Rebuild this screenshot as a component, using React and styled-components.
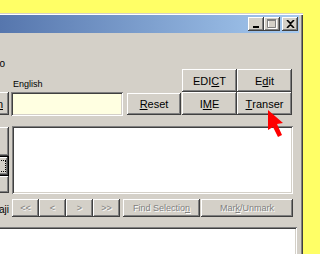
import styled, { createGlobalStyle } from 'styled-components';

const Global = createGlobalStyle`
  html, body {
    margin: 0;
    padding: 0;
    background: #ffff66;
    overflow: hidden;
  }
  body {
    font-family: "Liberation Sans", Arial, sans-serif;
  }
`;

const Screen = styled.div`
  position: relative;
  width: 320px;
  height: 254px;
  overflow: hidden;
  padding-top: 13px;
  box-sizing: border-box;
`;

const Window = styled.div`
  width: 303px;
  height: 260px;
  box-sizing: border-box;
  padding: 2px 4px 0 0;
  background: #d4d0c8;
  box-shadow: inset 0 1px #d4d0c8, inset 0 2px #fff, inset -1px 0 #404040,
    inset -2px 0 #808080;
`;

const TitleBar = styled.div`
  height: 18px;
  display: flex;
  align-items: center;
  justify-content: flex-end;
  padding-right: 1px;
  background: linear-gradient(90deg, #5676ad, #a6caf0);
`;

const raised = `
  background: #d4d0c8;
  box-shadow: inset -1px -1px #404040, inset 1px 1px #fff,
    inset -2px -2px #808080, inset 2px 2px #d4d0c8;
`;

const sunken = `
  box-shadow: inset 1px 1px #808080, inset -1px -1px #fff,
    inset 2px 2px #404040, inset -2px -2px #d4d0c8;
`;

const CapButton = styled.div`
  ${raised}
  width: 16px;
  height: 14px;
  display: flex;
  align-items: center;
  justify-content: center;
  margin-left: ${({ $gap }) => $gap || 0}px;
`;

const Body = styled.div`
  display: flex;
  flex-direction: column;
  overflow: hidden;
`;

const Row = styled.div`
  display: grid;
  grid-template-columns: 11px 116px 55px 55px 55px;
  height: ${({ $h }) => $h}px;
  margin-top: ${({ $mt }) => $mt || 0}px;
`;

const Strip = styled.div`
  width: 9px;
  overflow: hidden;
  display: flex;
  flex-direction: column;
  align-items: flex-end;
  justify-content: ${({ $end }) => ($end ? 'flex-end' : 'flex-start')};
`;

const StripText = styled.span`
  white-space: nowrap;
  font-size: ${({ $size }) => $size || 10}px;
  line-height: 12px;
  margin-right: ${({ $mr }) => $mr || 0}px;
  margin-bottom: ${({ $mb }) => $mb || 0}px;
  color: #000;
`;

const Label = styled.span`
  align-self: end;
  padding-left: 2px;
  font-size: 9px;
  line-height: 11px;
  margin-bottom: 2px;
  color: #000;
`;

const Button = styled.div`
  ${raised}
  box-sizing: border-box;
  flex-shrink: 0;
  display: flex;
  align-items: center;
  justify-content: center;
  white-space: nowrap;
  width: ${({ $w }) => ($w ? `${$w}px` : 'auto')};
  height: ${({ $h }) => $h || 23}px;
  margin-top: ${({ $mt }) => $mt || 0}px;
  font-size: ${({ $size }) => $size || 11}px;
  color: ${({ $off }) => ($off ? '#808080' : '#000')};
  text-shadow: ${({ $off }) => ($off ? '1px 1px 0 #fff' : 'none')};
  padding: 0 ${({ $pad }) => $pad || 0}px;
`;

const DefaultButton = styled(Button)`
  box-shadow: inset 0 0 0 1px #000, inset -2px -2px #404040, inset 2px 2px #fff,
    inset -3px -3px #808080;
  position: relative;
  &::after {
    content: '';
    position: absolute;
    inset: 4px 3px 4px 4px;
    border: 1px dotted #000;
  }
`;

const Field = styled.div`
  ${sunken}
  box-sizing: border-box;
  width: 112px;
  height: 24px;
  background: #ffffe1;
`;

const TextArea = styled.div`
  ${sunken}
  grid-column: 2 / -1;
  margin-left: 1px;
  width: 281px;
  background: #fff;
`;

const Nav = styled.div`
  grid-column: 2 / -1;
  display: flex;
  margin-left: 1px;
`;

const BottomBox = styled.div`
  ${sunken}
  width: 307px;
  height: 40px;
  margin: 10px 0 0 -10px;
  background: #fff;
`;

const Cursor = styled.svg`
  position: absolute;
  left: 267px;
  top: 109px;
`;

const MinIcon = () => (
  <svg width="8" height="7" viewBox="0 0 8 7">
    <rect x="1" y="5" width="6" height="2" fill="#000" />
  </svg>
);

const MaxIcon = () => (
  <svg width="10" height="10" viewBox="0 0 10 10">
    <path d="M1 1h8v8H1z M1 1h8v2" fill="none" stroke="#fff" strokeWidth="1" transform="translate(0.5 0.5)" />
    <path d="M0.5 0.5h8v8h-8z" fill="none" stroke="#808080" strokeWidth="1" />
    <rect x="0" y="0" width="9" height="2" fill="#808080" />
  </svg>
);

const CloseIcon = () => (
  <svg width="9" height="8" viewBox="0 0 9 8">
    <path d="M1 0l3.5 3.5L8 0 M1 8l3.5-3.5L8 8" fill="none" stroke="#000" strokeWidth="1.6" />
  </svg>
);

export default function App() {
  return (
    <Screen>
      <Global />
      <Window>
        <TitleBar>
          <CapButton>
            <MinIcon />
          </CapButton>
          <CapButton>
            <MaxIcon />
          </CapButton>
          <CapButton $gap={2}>
            <CloseIcon />
          </CapButton>
        </TitleBar>
        <Body>
          <Row $h={36}>
            <Strip $end>
              <StripText $mr={4} $mb={-1}>Kanji to</StripText>
            </Strip>
          </Row>
          <Row $h={23}>
            <div />
            <Label>English</Label>
            <div />
            <Button>
              EDI<u>C</u>T
            </Button>
            <Button>
              E<u>d</u>it
            </Button>
          </Row>
          <Row $h={24}>
            <Strip>
              <Button $h={23} $pad={6}>
                <span>
                  Japa<u>n</u>
                </span>
              </Button>
            </Strip>
            <Field />
            <Button $w={54} $h={22} $mt={1}>
              <u>R</u>eset
            </Button>
            <Button>
              I<u>M</u>E
            </Button>
            <Button>
              <u>T</u>ranser
            </Button>
          </Row>
          <Row $h={68} $mt={10}>
            <Strip>
              <Button $h={29} $mt={1} $pad={14}>Kana</Button>
              <DefaultButton $h={20} $pad={14}>Look</DefaultButton>
              <Button $h={17} $pad={14}>Clear</Button>
            </Strip>
            <TextArea />
          </Row>
          <Row $h={18} $mt={5}>
            <Strip $end>
              <StripText $size={10} $mb={1}>Romaji</StripText>
            </Strip>
            <Nav>
              <Button $w={27} $h={18} $size={9} $off>&lt;&lt;</Button>
              <Button $w={27} $h={18} $size={9} $off>&lt;</Button>
              <Button $w={27} $h={18} $size={9} $off>&gt;</Button>
              <Button $w={27} $h={18} $size={9} $off>&gt;&gt;</Button>
              <Button $w={77} $h={18} $size={9} $off style={{ marginLeft: 3 }}>
                Find Selectio<u>n</u>
              </Button>
              <Button $w={92} $h={18} $size={9} $off style={{ marginLeft: 1 }}>
                Mar<u>k</u>/Unmark
              </Button>
            </Nav>
          </Row>
          <BottomBox />
        </Body>
      </Window>
      <Cursor width="17" height="30" viewBox="0 0 17 30">
        <polygon points="1,1 16,14 10,15 15,26 11,28 6,18 1,21" fill="#ff0000" />
      </Cursor>
    </Screen>
  );
}
